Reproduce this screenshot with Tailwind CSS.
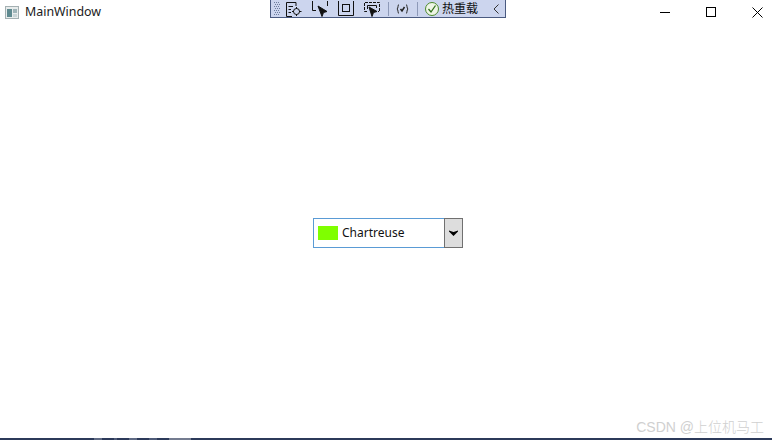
<!DOCTYPE html>
<html>
<head>
    <meta charset="UTF-8">
    <title>MainWindow</title>
    <script src="https://cdn.jsdelivr.net/npm/@tailwindcss/browser@4"></script>
</head>
<body class="bg-white overflow-hidden">
    <div class="relative w-[772px] h-[440px] overflow-hidden flex flex-col font-['Liberation_Sans','Noto_Sans_CJK_SC',sans-serif] text-black">
        <!-- title bar -->
        <div class="h-[24px] flex items-start justify-between relative">
            <div class="flex items-center h-[24px] pl-[5px] gap-[6px]">
                <svg width="14" height="13" viewBox="0 0 14 13">
                    <rect x="0.5" y="0.5" width="13" height="12" fill="#e8ecec" stroke="#a4b0b2"/>
                    <rect x="2" y="3" width="5" height="8" fill="#5f8a90"/>
                    <rect x="8" y="3" width="4" height="4" fill="#9fb4b8"/>
                    <rect x="8" y="8" width="4" height="3" fill="#c8d4d6"/>
                </svg>
                <span class="text-[12.4px] leading-none font-['Noto_Sans',sans-serif] text-[#1a1a1a]">MainWindow</span>
            </div>
            <div class="flex items-center h-[24px] mr-[-8px]">
                <div class="w-[46px] flex justify-center">
                    <div class="w-[10px] h-px bg-black"></div>
                </div>
                <div class="w-[46px] flex justify-center">
                    <div class="w-[10px] h-[10px] border border-black"></div>
                </div>
                <div class="w-[46px] flex justify-center">
                    <svg width="11" height="11" viewBox="0 0 11 11"><path d="M0.5 0.5 L10.5 10.5 M10.5 0.5 L0.5 10.5" stroke="#000" stroke-width="1"/></svg>
                </div>
            </div>
            <!-- debug toolbar floating over the title bar -->
            <div class="absolute left-[270px] top-0 w-[236px] h-[18px] bg-[#ccd5ee] border border-t-0 border-[#4a5a80] flex items-center pl-[3px]">
                <svg width="6" height="14" viewBox="0 0 6 14" fill="#6d7c9c">
                    <path d="M0 0h1v1H0zM2 0h1v1H2zM4 0h1v1H4zM1 2h1v1H1zM3 2h1v1H3zM5 2h1v1H5zM0 4h1v1H0zM2 4h1v1H2zM4 4h1v1H4zM1 6h1v1H1zM3 6h1v1H3zM5 6h1v1H5zM0 8h1v1H0zM2 8h1v1H2zM4 8h1v1H4zM1 10h1v1H1zM3 10h1v1H3zM5 10h1v1H5zM0 12h1v1H0zM2 12h1v1H2zM4 12h1v1H4z"/>
                </svg>
                <svg class="ml-[5px]" width="18" height="16" viewBox="0 0 18 16" fill="none" stroke="#111">
                    <path d="M7 15.5H1.5V1.5H11V5"/>
                    <path d="M3.5 5.5H8M3.5 8.5H6M3.5 11.5H6"/>
                    <circle cx="11.5" cy="10.5" r="3"/>
                    <path d="M11.5 6v2M11.5 13v2M7 10.5h2M14 10.5h2.5"/>
                </svg>
                <svg class="ml-[8px]" width="18" height="16" viewBox="0 0 18 16" fill="none" stroke="#111">
                    <path d="M1.5 0v9.5H5M16.5 0v5"/>
                    <path d="M7 5L16 10.5L12.5 11.5L11 15.5Z" fill="#111"/>
                </svg>
                <svg class="ml-[9px]" width="16" height="16" viewBox="0 0 16 16" fill="none" stroke="#111">
                    <path d="M0.5 0V14.5H15.5V0"/>
                    <rect x="4.5" y="3.5" width="7" height="7"/>
                </svg>
                <svg class="ml-[9px]" width="18" height="16" viewBox="0 0 18 16" fill="none" stroke="#111">
                    <path d="M4 10.5H1.5V1.5H16.5V10.5H15" stroke-dasharray="3 1"/>
                    <path d="M4.5 8V4.5H13.5V7"/>
                    <path d="M6 6L14 10.5L10.5 11.5L9 15.5Z" fill="#111"/>
                </svg>
                <div class="ml-[7px] w-px h-[14px] bg-[#8d99b8]"></div>
                <svg class="ml-[7px]" width="13" height="12" viewBox="0 0 13 12" fill="none" stroke="#222">
                    <path d="M3 1.5C1.5 1.5 2.5 5.5 1 6C2.5 6.5 1.5 10.5 3 10.5M10 1.5C11.5 1.5 10.5 5.5 12 6C10.5 6.5 11.5 10.5 10 10.5"/>
                    <path d="M4.5 6L6 8L8.5 4" stroke-width="1.5"/>
                </svg>
                <div class="ml-[8px] w-px h-[14px] bg-[#8d99b8]"></div>
                <svg class="ml-[7px]" width="14" height="14" viewBox="0 0 14 14" fill="none">
                    <circle cx="7" cy="7" r="6.5" fill="#eef5e6" stroke="#4c8a2c"/>
                    <path d="M3.5 7L6 10L10.5 3.5" stroke="#2f6f1a" stroke-width="1.3"/>
                </svg>
                <span class="ml-[3px] text-[12px] leading-none text-[#111]">热重载</span>
                <svg class="ml-[15px]" width="6" height="10" viewBox="0 0 6 10" fill="none" stroke="#333"><path d="M5.5 0.5L1 5L5.5 9.5"/></svg>
            </div>
        </div>

        <!-- content: centered combo box -->
        <div class="flex-1 flex items-center justify-center">
            <div class="w-[150px] h-[30px] flex border border-[#5a9bd5] mt-[2px] ml-[4px]">
                <div class="flex-1 flex items-center pl-[4px] gap-[4px]">
                    <div class="w-[20px] h-[14px] bg-[#7fff00]"></div>
                    <span class="text-[12px] leading-none font-['Noto_Sans',sans-serif] text-[#111]">Chartreuse</span>
                </div>
                <div class="w-[19px] -my-px -mr-px bg-[#dddddd] border border-[#707070] flex items-center justify-center">
                    <svg width="9" height="6" viewBox="0 0 9 6"><path d="M0 0.5L4.5 2L9 0.5V1.5L4.5 6L0 1.5Z" fill="#000"/></svg>
                </div>
            </div>
        </div>

        <!-- image watermark and the edge of the taskbar below -->
        <div class="absolute right-[8px] bottom-[6px] text-[14px] leading-none font-light text-[#d0d0d0]">CSDN @上位机马工</div>
        <div class="absolute left-0 right-0 bottom-0 h-[2px] bg-[#2c3a5a] flex gap-[12px] pl-[94px]">
            <div class="w-[8px] bg-[#5f6a84]"></div>
            <div class="w-[3px] bg-[#4f5b78]"></div>
            <div class="w-[8px] bg-[#5f6a84]"></div>
            <div class="w-[8px] bg-[#4f5b78]"></div>
            <div class="w-[22px] bg-[#747c90]"></div>
        </div>
    </div>
</body>
</html>
